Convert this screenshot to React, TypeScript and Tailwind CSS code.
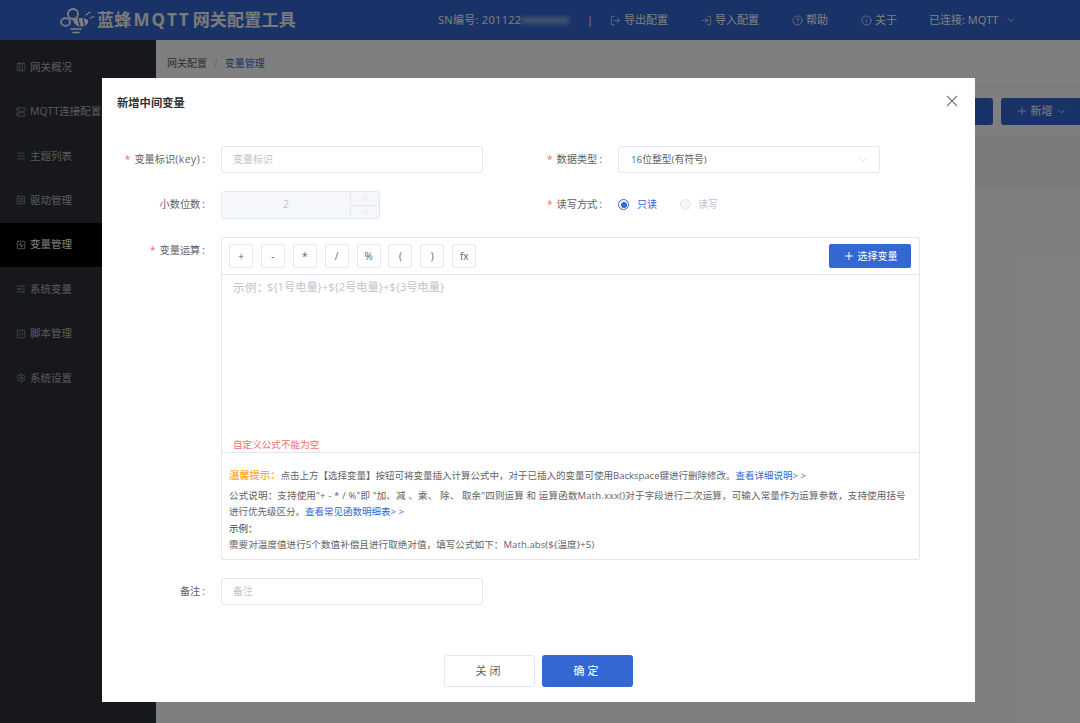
import React from "react";
import { ChevronDown, ChevronUp, X, Plus, LogIn, LogOut, CircleHelp, Info, Columns3, Server, Menu, SquareMenu, SquareActivity, SlidersHorizontal, SquareCode, Settings } from "lucide-react";

const C = "\uFF0C";
const K = "\uFF1A";

const nav: [string, React.ElementType][] = [
  ["网关概况", Columns3],
  ["MQTT连接配置", Server],
  ["主题列表", Menu],
  ["驱动管理", SquareMenu],
  ["变量管理", SquareActivity],
  ["系统变量", SlidersHorizontal],
  ["脚本管理", SquareCode],
  ["系统设置", Settings],
];

function Label({ text, req }: { text: React.ReactNode; req?: boolean }) {
  return (
    <div className="flex justify-end items-center w-[104px] text-[10.2px] text-[#606266] shrink-0 h-[27px] pr-[1px]">
      {req && <span className="text-[#f56c6c] mr-[4px] text-[10px]">*</span>}
      <span>{text}</span>
      <span className="ml-[2px]">:</span>
    </div>
  );
}

function Logo() {
  return (
    <svg width="36" height="28" viewBox="0 0 36 28" fill="none" className="shrink-0">
      <circle cx="13" cy="8" r="5" stroke="#fff" strokeWidth="1.800" />
      <ellipse cx="5.500" cy="16" rx="4.500" ry="3.800" stroke="#fff" strokeWidth="1.800" />
      <path d="M13 14c4-2.500 11-3 15 0 1 3-2 6.500-7 6.500-4 0-7-2.500-8-6.500z" fill="#fff" />
      <path d="M18 13l2 7M23 12.500l1.500 7" stroke="#3367d1" strokeWidth="1.300" />
      <path d="M11 23h10M13 26.500h6" stroke="#fff" strokeWidth="1.700" strokeLinecap="round" />
      <path d="M26 9l4-3M30 12l4-1.500" stroke="#fff" strokeWidth="1.200" strokeLinecap="round" />
    </svg>
  );
}

function HeaderItem({ icon: Icon, text, w }: { icon: React.ElementType; text: string; w: string }) {
  return (
    <div className={`flex items-center gap-[3px] text-[11px] text-white ${w}`}>
      <Icon size={11} strokeWidth={1.5} />
      <span>{text}</span>
    </div>
  );
}

export default function App() {
  const ops = ["+", "-", "*", "/", "%", "(", ")", "fx"];
  return (
    <div
      className="relative w-[1080px] h-[723px] overflow-hidden bg-white"
      style={{ fontFamily: '"Open Sans","Noto Sans CJK SC",sans-serif' }}
    >
      <header className="h-10 bg-[#3367d1] flex items-center text-white">
        <div className="flex items-center w-[438px] pl-[60px]">
          <Logo />
          <span className="ml-[1px] text-[17px] font-bold tracking-[0.2px] text-[#f4f4f4] whitespace-nowrap">
            蓝蜂<span className="tracking-[2px] mx-[2px]">MQTT</span>网关配置工具
          </span>
        </div>
        <div className="flex items-center text-[11px] w-[149px] tracking-[0.3px]">
          <span>SN编号: 201122</span>
          <span className="w-[48px] h-[7px] bg-white/40 blur-[2px]" />
        </div>
        <span className="text-[11px] w-[23px]">|</span>
        <HeaderItem icon={LogOut} text="导出配置" w="w-[91px]" />
        <HeaderItem icon={LogIn} text="导入配置" w="w-[91px]" />
        <HeaderItem icon={CircleHelp} text="帮助" w="w-[69px]" />
        <HeaderItem icon={Info} text="关于" w="w-[68px]" />
        <div className="flex items-center text-[11px]">
          <span>已连接: MQTT</span>
          <ChevronDown size={12} strokeWidth={1.5} className="ml-[7px]" />
        </div>
      </header>
      <div className="flex h-[683px]">
        <aside className="w-[156px] bg-[#2e3036] pt-[5px] shrink-0 text-[10.5px] text-[#b4b6ba]">
          {nav.map(([t, Icon], i) => (
            <div
              key={t}
              className={`h-[44.400px] flex items-center pl-[16px] gap-[4px] whitespace-nowrap ${i === 4 ? "bg-[#020202] text-white" : ""}`}
            >
              <Icon size={10} strokeWidth={1.5} />
              <span className="pt-[1px]">{t}</span>
            </div>
          ))}
        </aside>
        <main className="flex-1 min-w-0">
          <div className="h-[47px] border-b border-[#eeeeee] flex items-center pl-[11px] pt-[1px] text-[10px] text-[#606266]">
            <span>网关配置</span>
            <span className="mx-[7px] text-[#c0c4cc]">/</span>
            <span className="text-[#3367d1]">变量管理</span>
          </div>
          <div className="h-[48px] flex items-center justify-end gap-[8px] -mr-[1px]">
            <div className="w-[60px] h-[27px] bg-[#3367d1] rounded-[3px]" />
            <div className="w-[80px] h-[27px] bg-[#3367d1] rounded-l-[3px] flex items-center justify-center gap-[3px] text-[11px] text-white">
              <Plus size={12} strokeWidth={1.5} />
              <span>新增</span>
              <ChevronDown size={11} strokeWidth={1.5} />
            </div>
          </div>
          <div className="h-[52px] bg-[#f5f5f5]" />
        </main>
      </div>

      <div className="absolute inset-0 bg-black/50" />

      <section className="absolute left-[102px] top-[78px] w-[873px] h-[624px] bg-white flex flex-col">
        <div className="h-[68px] pl-[15px] pt-[17px] flex items-start justify-between pr-[14px]">
          <span className="text-[11.300px] font-bold text-[#303133] leading-[16px]">新增中间变量</span>
          <X size={18} strokeWidth={1.700} className="text-[#7d8087] -mt-[3px]" />
        </div>

        <div className="flex flex-col">
          <div className="flex h-[45px]">
            <Label text={<>变量标识<span className="tracking-[0.6px]">(key)</span></>} req />
            <div className="ml-[15px] w-[262px] h-[27px] border border-[#e4e7ed] rounded-[3px] flex items-center pl-[11px] text-[10px] text-[#c0c4cc]">变量标识</div>
            <div className="ml-[16px] w-[104px] shrink-0"><Label text="数据类型" req /></div>
            <div className="ml-[15px] w-[262px] h-[27px] border border-[#e4e7ed] rounded-[3px] flex items-center justify-between pl-[12px] pr-[10px] text-[9.800px] text-[#606266]">
              <span className="pt-[1px]">16位整型(有符号)</span>
              <ChevronDown size={12} strokeWidth={1.2} className="text-[#c0c4cc]" />
            </div>
          </div>
          <div className="flex h-[46px]">
            <Label text="小数位数" />
            <div className="ml-[15px] w-[159px] h-[28px] border border-[#e4e7ed] rounded-[3px] bg-[#f5f7fa] flex items-center">
              <span className="flex-1 text-center text-[10.500px] text-[#c0c4cc]">2</span>
              <div className="w-[29px] h-full border-l border-[#e4e7ed] flex flex-col">
                <div className="flex-1 flex items-center justify-center border-b border-[#e4e7ed]"><ChevronUp size={10} strokeWidth={1.2} className="text-[#c8ccd3]" /></div>
                <div className="flex-1 flex items-center justify-center"><ChevronDown size={10} strokeWidth={1.2} className="text-[#c8ccd3]" /></div>
              </div>
            </div>
            <div className="ml-[119px] w-[104px] shrink-0"><Label text="读写方式" req /></div>
            <div className="ml-[15px] flex items-center h-[27px] text-[10px]">
              <span className="w-[11px] h-[11px] rounded-full border border-[#3367d1] flex items-center justify-center"><span className="w-[6px] h-[6px] rounded-full bg-[#3367d1]" /></span>
              <span className="ml-[8px] text-[#3367d1]">只读</span>
              <span className="ml-[23px] w-[11px] h-[11px] rounded-full border border-[#e4e7ed] bg-[#f5f7fa]" />
              <span className="ml-[7px] text-[#c0c4cc]">读写</span>
            </div>
          </div>
          <div className="flex h-[341px]">
            <Label text="变量运算" req />
            <div className="ml-[15px] w-[699px] h-[323px] border border-[#e4e7ed] rounded-[2px] flex flex-col">
              <div className="h-[37px] shrink-0 border-b border-[#e4e7ed] flex items-center pl-[7px] pr-[8px]">
                <div className="flex gap-[7.900px]">
                  {ops.map((o) => (
                    <div key={o} className="w-[24px] h-[24px] border border-[#e4e7ed] rounded-[2px] flex items-center justify-center text-[10px] text-[#606266]">{o}</div>
                  ))}
                </div>
                <div className="ml-auto w-[82px] h-[24px] bg-[#3367d1] rounded-[2px] flex items-center justify-center gap-[3px] text-[10px] text-white">
                  <Plus size={12} strokeWidth={2} />
                  <span>选择变量</span>
                </div>
              </div>
              <div className="h-[178px] shrink-0 flex flex-col justify-between pl-[11px] pt-[3px] border-b border-[#e4e7ed]">
                <div className="text-[11.200px] leading-[18px] text-[#c0c4cc] flex">
                  <span className="w-[34px] text-[11.800px] whitespace-nowrap">示例{K}</span>
                  <span>${"{"}1号电量{"}"}+${"{"}2号电量{"}"}+${"{"}3号电量{"}"}</span>
                </div>
                <div className="text-[9.600px] leading-[14px] text-[#f56c6c] whitespace-nowrap">自定义公式不能为空</div>
              </div>
              <div className="flex-1 pl-[7px] pt-[14px] text-[9.500px] text-[#606266] leading-[16.500px] whitespace-nowrap">
                <div className="mb-[3px]">
                  <span className="text-[#ffa726] text-[10.300px] font-medium">温馨提示{K}</span>
                  <span>点击上方【选择变量】按钮可将变量插入计算公式中{C}对于已插入的变量可使用Backspace键进行删除修改。</span>
                  <span className="text-[#3367d1]">查看详细说明&gt; &gt;</span>
                </div>
                <div className="tracking-[0.17px]">公式说明{K}支持使用"+ - * / %"即 "加、减 、乘、 除、 取余"四则运算 和 运算函数Math.xxx()对于字段进行二次运算{C}可输入常量作为运算参数{C}支持使用括号</div>
                <div>进行优先级区分。<span className="text-[#3367d1]">查看常见函数明细表&gt; &gt;</span></div>
                <div className="text-[#404040]">示例{K}</div>
                <div className="tracking-[0.1px]">需要对温度值进行5个数值补偿且进行取绝对值{C}填写公式如下{K}Math.abs(${"{"}温度{"}"}+5)</div>
              </div>
            </div>
          </div>
          <div className="flex h-[27px]">
            <Label text="备注" />
            <div className="ml-[15px] w-[262px] h-[27px] border border-[#e4e7ed] rounded-[3px] flex items-center pl-[11px] text-[10px] text-[#c0c4cc]">备注</div>
          </div>
        </div>

        <div className="flex justify-center gap-[7px] mt-[50px]">
          <div className="w-[91px] h-[32px] border border-[#e4e7ed] rounded-[3px] flex items-center justify-center text-[11px] tracking-[3px] text-[#606266]">关闭</div>
          <div className="w-[91px] h-[32px] bg-[#3367d1] rounded-[3px] flex items-center justify-center text-[11px] tracking-[3px] text-white">确定</div>
        </div>
      </section>
    </div>
  );
}
